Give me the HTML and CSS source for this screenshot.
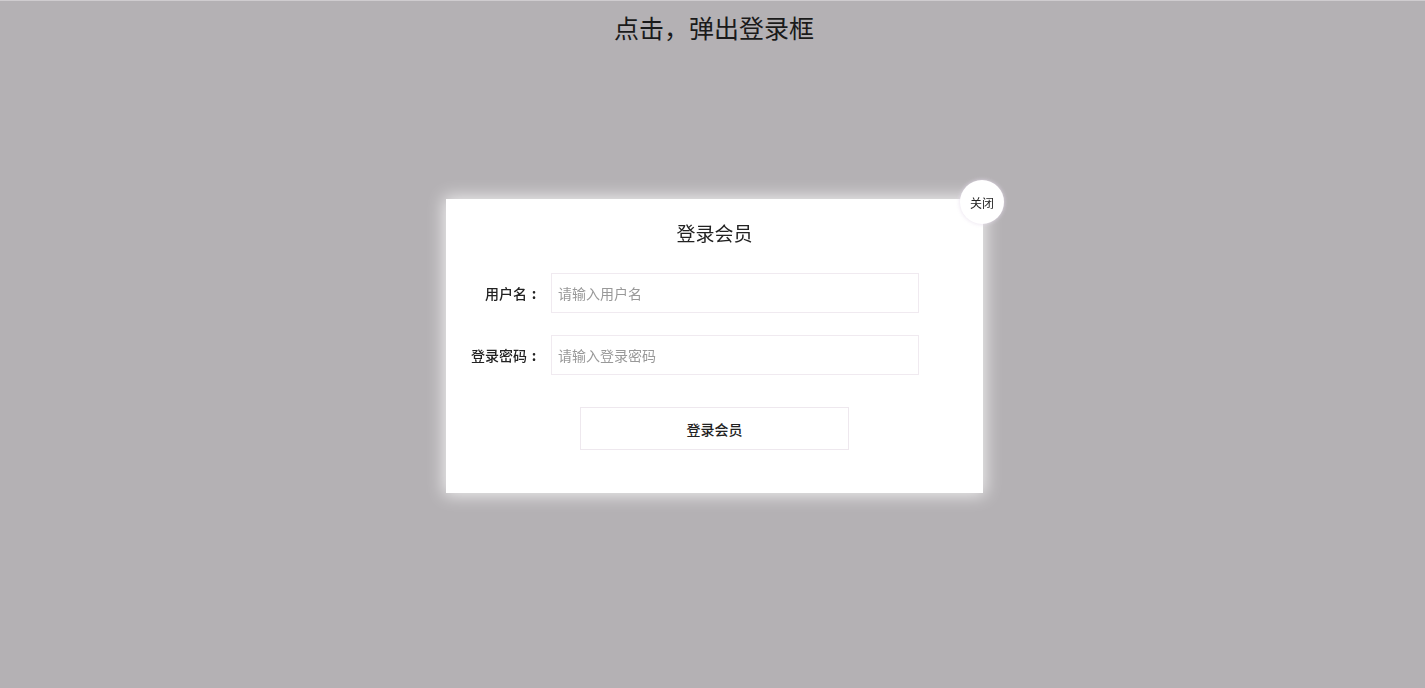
FILE: index.html
```html
<!DOCTYPE html>
<html lang="zh-CN">
<head>
    <meta charset="UTF-8">
    <meta name="viewport" content="width=device-width, initial-scale=1.0">
    <title>登录弹框</title>
    <link rel="stylesheet" href="styles.css">
</head>
<body>
    <h1 class="page-title">点击，弹出登录框</h1>

    <div class="mask">
        <div class="login-box">
            <a href="#" class="close-btn">关闭</a>
            <h2 class="login-title">登录会员</h2>
            <form class="login-form">
                <div class="form-row">
                    <label for="username">用户名<span class="colon">:</span></label>
                    <input type="text" id="username" placeholder="请输入用户名">
                </div>
                <div class="form-row">
                    <label for="password">登录密码<span class="colon">:</span></label>
                    <input type="password" id="password" placeholder="请输入登录密码">
                </div>
                <button type="button" class="login-btn">登录会员</button>
            </form>
        </div>
    </div>
</body>
</html>
```

FILE: styles.css
```css
* {
    box-sizing: border-box;
}
body {
    font-family: "Noto Sans CJK SC", "Liberation Sans", sans-serif;
    margin: 0;
    height: 688px;
    background-color: #b4b1b4;
    border-top: 1px solid #cfcccf;
    color: #222;
}
.page-title {
    margin: 0;
    padding: 11px 0 0 3px;
    font-size: 25px;
    line-height: 30px;
    font-weight: normal;
    text-align: center;
    color: #1a1a1a;
}
.mask {
    position: fixed;
    top: 0;
    left: 0;
    right: 0;
    bottom: 0;
    display: flex;
    align-items: center;
    justify-content: center;
    padding: 4px 0 0 4px;
}
.login-box {
    position: relative;
    width: 537px;
    padding: 20px 0 43px;
    background-color: #fff;
    box-shadow: 0 0 16px 2px rgba(255, 255, 255, 0.8);
}
.close-btn {
    position: absolute;
    top: -19px;
    right: -21px;
    width: 44px;
    height: 44px;
    border-radius: 50%;
    background-color: #fff;
    box-shadow: 0 0 4px rgba(230, 220, 235, 0.9);
    display: flex;
    align-items: center;
    justify-content: center;
    font-size: 12px;
    color: #222;
    text-decoration: none;
}
.login-title {
    margin: 0 0 26px;
    font-size: 19px;
    line-height: 28px;
    font-weight: normal;
    text-align: center;
    color: #222;
}
.login-form {
    display: flex;
    flex-direction: column;
    gap: 22px;
}
.form-row {
    display: flex;
    align-items: center;
}
.form-row label {
    width: 95px;
    margin-right: 10px;
    text-align: right;
    font-size: 14px;
    font-weight: 500;
    color: #222;
}
.colon {
    display: inline-block;
    width: 14px;
    text-align: center;
    font-weight: bold;
}
.form-row input {
    width: 368px;
    height: 40px;
    padding: 0 6px;
    border: 1px solid #f0eaf0;
    outline: none;
    font-family: inherit;
    font-size: 14px;
    color: #333;
}
.form-row input::placeholder {
    color: #999;
}
.login-btn {
    align-self: center;
    width: 269px;
    height: 43px;
    margin-top: 10px;
    background-color: #fff;
    border: 1px solid #eee8ee;
    font-family: inherit;
    font-size: 14px;
    font-weight: 500;
    color: #222;
    cursor: pointer;
}
```
